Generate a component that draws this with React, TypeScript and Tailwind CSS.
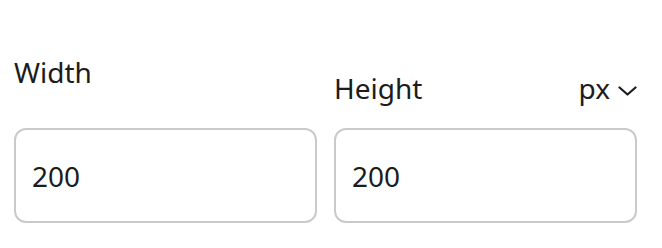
import React from "react";

export default function App() {
  const font = { fontFamily: '"Noto Sans", sans-serif' };
  return (
    <div className="w-[662px] h-[248px] bg-white text-[#1c1c1c]" style={font}>
      <div className="flex gap-[17px] pl-[14px]">
        <div className="flex flex-col w-[303px] pt-[56px]">
          <div className="text-[28px] leading-[32px] h-[32px]">Width</div>
          <div className="mt-[40px] h-[95px] border-2 border-[#cacaca] rounded-[12px] flex items-center pl-4 text-[28px] leading-[32px]">
            200
          </div>
        </div>
        <div className="flex flex-col w-[303px] pt-[72px]">
          <div className="flex justify-between items-center h-[32px]">
            <span className="text-[28px] leading-[32px]">Height</span>
            <span className="flex items-center gap-[8px] text-[28px] leading-[32px]">
              px
              <svg width="19" height="10" viewBox="0 0 19 10" className="mt-[6px]">
                <polyline points="1.5,1.5 9.5,8.5 17.5,1.5" fill="none" stroke="#1c1c1c" strokeWidth="2.2" strokeLinecap="round" strokeLinejoin="round" />
              </svg>
            </span>
          </div>
          <div className="mt-[24px] h-[95px] border-2 border-[#cacaca] rounded-[12px] flex items-center pl-4 text-[28px] leading-[32px]">
            200
          </div>
        </div>
      </div>
    </div>
  );
}
